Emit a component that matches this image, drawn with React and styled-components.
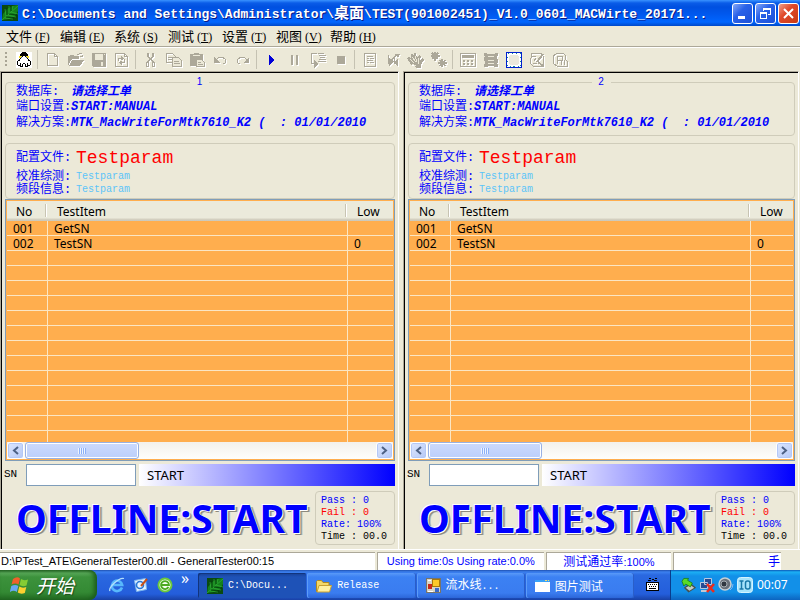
import React from "react";
import styled, { createGlobalStyle, css } from "styled-components";

const CJK = '"Noto Sans CJK SC", sans-serif';
const MONO = `"Liberation Mono", ${CJK}`;
const UI = `"Noto Sans", ${CJK}`;
const FACE = "#ece9d8";
const BLUE = "#0000ff";

const Global = createGlobalStyle`
  * { box-sizing: border-box; }
  body { margin: 0; background: ${FACE}; color: #000; font: 12px ${UI}; overflow: hidden; }
  button { font: inherit; border: 0; margin: 0; padding: 0; background: none; color: inherit; }
`;

const Screen = styled.div`
  height: 100vh;
  display: flex;
  flex-direction: column;
`;

/* title bar */
const TitleBar = styled.header`
  height: 26px;
  flex: none;
  display: flex;
  align-items: center;
  gap: 4px;
  padding: 0 1px 0 2px;
  background: linear-gradient(#3a93ff 0, #0a5ce8 3px, #0050e0 7px, #0058ee 14px, #0066ff 22px, #0048c8 26px);
`;
const Title = styled.h1`
  flex: 1;
  min-width: 0;
  margin: 0;
  overflow: hidden;
  white-space: pre;
  color: #fff;
  font: bold 13px/24px ${MONO};
  text-shadow: 1px 1px 0 #0a1883;
`;
const TitleHan = styled.span`
  font: bold 15px/24px ${CJK};
`;
const WindowButtons = styled.div`
  display: flex;
  gap: 2px;
`;
const WindowButton = styled.button`
  width: 21px;
  height: 21px;
  display: grid;
  place-items: center;
  border: 1px solid #fff;
  border-radius: 3px;
  background: ${(p) =>
    p.$close
      ? "linear-gradient(135deg, #f0a08a, #e0492a 40%, #c83a14)"
      : "linear-gradient(135deg, #86a8f8, #2a62e8 40%, #1c50d8)"};
`;

/* menu */
const MenuBar = styled.nav`
  height: 21px;
  flex: none;
  display: flex;
  padding-left: 6px;
  border-bottom: 1px solid #aca899;
`;
const MenuItem = styled.button`
  width: 54px;
  text-align: left;
  white-space: nowrap;
  font: 13px/18px ${CJK};
`;
const Hotkey = styled.span`
  font: 12px/18px "Liberation Serif", serif;
`;

/* toolbar */
const ToolBar = styled.div`
  height: 24px;
  flex: none;
  display: flex;
  align-items: center;
  padding-left: 5px;
  border-top: 1px solid #fff;
`;
const Grip = styled.span`
  width: 7px;
  height: 16px;
  background: repeating-linear-gradient(#a9a594 0 2px, transparent 2px 4px) 0 0 / 2px 100% no-repeat;
`;
const ToolButton = styled.button`
  width: 23px;
  height: 22px;
  display: grid;
  place-items: center;
  svg { display: block; ${(p) => p.$off && css`filter: drop-shadow(1px 1px 0 #fff);`} }
`;
const ToolSep = styled.span`
  width: 6px;
  height: 19px;
  background: linear-gradient(#c5c2b2, #c5c2b2) 2px 0 / 1px 100% no-repeat;
`;

/* work area */
const Work = styled.main`
  flex: 1;
  min-height: 0;
  display: grid;
  grid-template-columns: minmax(0, 403fr) minmax(0, 397fr);
  border-bottom: 1px solid #fff;
`;
const Station = styled.section`
  min-width: 0;
  min-height: 0;
  display: flex;
  flex-direction: column;
  margin-right: ${(p) => (p.$last ? 1 : 4)}px;
  padding: 10px 3px 4px 3px;
  border-top: 1px solid #aca899;
  border-left: 1px solid #aca899;
  border-right: 1px solid #fff;
  box-shadow: inset 1px 1px 0 #000;
`;
const Group = styled.section`
  position: relative;
  flex: none;
  margin-left: ${(p) => (p.$stats ? 0 : 1)}px;
  border: 1px solid #cfccba;
  border-radius: 4px;
  color: ${BLUE};
`;
const Source = styled(Group)`
  height: 54px;
  margin-bottom: 7px;
  padding: 1px 0 0 10px;
`;
const Config = styled(Group)`
  height: 56px;
  padding: 3px 0 0 10px;
`;
const Badge = styled.span`
  position: absolute;
  top: -6px;
  left: 50%;
  width: 19px;
  height: 9px;
  margin-left: -10px;
  overflow: hidden;
  text-align: center;
  background: ${FACE};
  font: 10px/9px "Liberation Sans", sans-serif;
`;
const Field = styled.div`
  display: flex;
  align-items: center;
  height: ${(p) => p.$h}px;
  white-space: pre;
`;
const FieldName = styled.span`
  width: ${(p) => p.$w || 55}px;
  font: 12px/12px ${MONO};
`;
const SourceValue = styled.span`
  font: italic bold 12px/16px ${MONO};
`;
const ConfigValue = styled.span`
  color: ${(p) => (p.$main ? "#ff0000" : "#5cc4f8")};
  font: ${(p) => (p.$main ? "18px/24px" : "10px/12px")} ${MONO};
`;

/* list */
const List = styled.div`
  flex: 1;
  min-height: 0;
  display: flex;
  flex-direction: column;
  margin-left: 1px;
  padding: 1px;
  border: 1px solid #7f9db9;
  background: #ffae4e;
`;
const Rows = styled.div`
  flex: 1;
  min-height: 0;
  overflow: hidden;
`;
const Table = styled.table`
  width: 100%;
  table-layout: fixed;
  border-collapse: separate;
  border-spacing: 0;
`;
const Col = styled.col`
  width: ${(p) => p.$w};
`;
const Th = styled.th`
  height: 20px;
  padding: 0 0 0 9px;
  text-align: left;
  font: 12px/17px ${UI};
  background:
    linear-gradient(#c8c4b2, #c8c4b2) right 2px top 3px / ${(p) => (p.$last ? 0 : 1)}px 13px no-repeat,
    linear-gradient(#fff, #fff) right 1px top 3px / ${(p) => (p.$last ? 0 : 1)}px 13px no-repeat,
    linear-gradient(#ebeadb 0 17px, #d6d2c2 18px, #cbc7b8 20px);
`;
const Td = styled.td`
  height: 15px;
  padding: 2px 0 0 6px;
  font: 12px/12px ${UI};
  border-bottom: 1px solid #fbe6c4;
  border-right: ${(p) => (p.$last ? 0 : 1)}px solid #fbe6c4;
`;
const ScrollBar = styled.div`
  height: 17px;
  flex: none;
  display: flex;
  justify-content: space-between;
  background: linear-gradient(#f3f1ec, #fefefb);
`;
const ScrollButton = styled.button`
  width: 17px;
  height: 17px;
  display: grid;
  place-items: center;
  border: 1px solid #fff;
  border-radius: 3px;
  background: linear-gradient(135deg, #dce6fd, #b6c9f6);
  box-shadow: inset 0 0 0 1px #b4c8f6;
`;
const Thumb = styled.div`
  width: 114px;
  margin: 0 auto 0 1px;
  display: grid;
  place-items: center;
  border: 1px solid #98b1e4;
  border-radius: 3px;
  box-shadow: inset 0 0 0 1px #fff;
  background: linear-gradient(#ccdafd, #bccffb);
`;
const ThumbGrip = styled.span`
  width: 8px;
  height: 6px;
  background: repeating-linear-gradient(90deg, #eef4fe 0 1px, #8cb0f8 1px 2px);
`;

/* serial number row */
const SerialRow = styled.div`
  flex: none;
  display: flex;
  height: 22px;
  margin-top: 3px;
`;
const SerialLabel = styled.label`
  width: 22px;
  font: 11px/20px ${MONO};
`;
const SerialInput = styled.input`
  width: 110px;
  height: 22px;
  padding: 0 3px;
  border: 1px solid #7f9db9;
  background: #fff;
  font: 12px ${UI};
`;
const StateBar = styled.div`
  flex: 1;
  margin-left: 3px;
  padding-left: 8px;
  font: 13px/22px ${UI};
  background: linear-gradient(90deg, #fff, ${BLUE});
`;
const ResultRow = styled.div`
  flex: none;
  display: flex;
  justify-content: space-between;
  margin-top: 5px;
`;
const Result = styled.strong`
  padding-left: 12px;
  color: ${BLUE};
  white-space: nowrap;
  font: bold 39px/54px ${UI};
  text-shadow: -1px -1px 0 #fff, -2px -1px 0 #e4e2dc, 1px 1px 0 #fff, 2px 2px 0 #8c897c, 3px 2px 0 #b4b1a4;
`;
const Stats = styled(Group)`
  width: 80px;
  height: 54px;
  padding: 3px 0 0 5px;
`;
const Stat = styled.div`
  color: ${(p) => p.$color};
  white-space: pre;
  font: 10px/12px ${MONO};
`;

/* status bar */
const StatusBar = styled.footer`
  height: 20px;
  flex: none;
  display: grid;
  grid-template-columns: 376fr 167fr 126fr 108fr 17fr;
  gap: 2px;
  padding-top: 2px;
`;
const StatusCell = styled.div`
  overflow: hidden;
  padding: 0 1px;
  border-top: 1px solid #aca899;
  border-left: ${(p) => (p.$first ? 0 : 1)}px solid #aca899;
  background: #fff;
  white-space: nowrap;
  color: ${(p) => (p.$first ? "#000" : BLUE)};
  text-align: ${(p) => p.$align || "left"};
  font: 11px/16px "Liberation Sans", ${CJK};
`;
const Han = styled.span`
  font: ${(p) => p.$size || 12}px/16px ${CJK};
`;

/* task bar */
const TaskBar = styled.footer`
  height: 30px;
  flex: none;
  display: flex;
  color: #fff;
  background: linear-gradient(#1f50b0 0, #3c81f0 2px, #2a68e0 5px, #245edb 24px, #1941a5 30px);
`;
const Start = styled.button`
  width: 97px;
  display: flex;
  align-items: center;
  gap: 6px;
  padding-left: 10px;
  border-radius: 0 8px 8px 0;
  background: linear-gradient(#2a6a2a 0, #58a858 3px, #3c923c 7px, #348a34 22px, #226a22 30px);
  box-shadow: inset -3px 0 4px #1c5c1c;
  font: italic 19px/26px ${CJK};
  text-shadow: 1px 1px 1px #1a4a1a;
`;
const QuickLaunch = styled.div`
  width: 101px;
  display: flex;
  align-items: center;
  gap: 8px;
  padding-left: 12px;
`;
const QuickButton = styled.button`
  width: 16px;
  height: 26px;
  display: grid;
  place-items: center;
`;
const More = styled.button`
  height: 26px;
  padding-bottom: 14px;
  font: 16px/12px ${UI};
`;
const Tasks = styled.div`
  flex: 1;
  min-width: 0;
  display: grid;
  grid-template-columns: repeat(4, minmax(0, 1fr));
  gap: 1px;
  padding: 3px 0 2px;
`;
const Task = styled.button`
  display: flex;
  align-items: center;
  gap: 5px;
  padding-left: 9px;
  border-radius: 2px;
  white-space: nowrap;
  font: 10px/16px ${MONO};
  background: ${(p) =>
    p.$active
      ? "linear-gradient(#173f94, #1e52b7 4px, #1e52b7)"
      : "linear-gradient(#5a9af8, #3c81f3 4px, #3a7cf0 20px, #2c66d8)"};
  box-shadow: ${(p) => (p.$active ? "inset 1px 1px 0 #12347c" : "inset 1px 0 0 #5c9cf8, inset -1px 0 0 #2a5ec8")};
`;
const Language = styled.button`
  width: 36px;
  display: grid;
  place-items: center;
`;
const Tray = styled.div`
  width: 130px;
  display: flex;
  align-items: center;
  gap: 2px;
  padding-left: 10px;
  border-left: 1px solid #0a3c8c;
  background: linear-gradient(#0c58b8 0, #1cb0f4 2px, #1290e8 6px, #1290e8 22px, #0c64c0 30px);
`;
const Clock = styled.time`
  margin-left: 2px;
  font: 12px/26px "Noto Sans", sans-serif;
`;

const G = "#aca899";
const Svg = ({ w = 16, h = 16, children, ...rest }) => (
  <svg width={w} height={h} viewBox={`0 0 ${w} ${h}`} fill="none" shapeRendering="crispEdges" aria-hidden="true" {...rest}>
    {children}
  </svg>
);

const LeafIcon = ({ size = 16 }) => (
  <svg width={size} height={size} viewBox="0 0 16 16" aria-hidden="true">
    <path fill="#0a4a10" d="M0 0h16v16H0z" />
    <path fill="#14801c" d="M0 15 1 9l4-5 5-3 6-1v6l-3 5-6 3z" />
    <path stroke="#37b93c" strokeWidth=".6" d="M0 15 16 1M4 11 3 4m4 4V1m3 4 1-4M6 10l8 2M9 7l7 2M3 13l8 1" />
    <path stroke="#04380a" strokeWidth=".8" d="M5 10 5 3m4 3 0-5M7 9l8 1M4 12l8 1" />
  </svg>
);

const icons = {
  penguin: (
    <Svg>
      <path fill="#fff" d="M0 0h16v16H0z" />
      <path fill="#000" d="M6 0h4v1h1v1h1v3H4V2h1V1h1z" />
      <path fill="#fff" d="M7 4h2v2H7z" />
      <path fill="#000" d="M7 3h2v1H7z" />
      <path fill="#f0dc20" d="M3 4h3v2H3zM10 4h3v2h-3z" />
      <path fill="#1830c0" d="M5 5h1v1H5zM10 5h1v1h-1z" />
      <path stroke="#000" d="M4.500 6v1M11.500 6v1M3.500 7v2M12.500 7v2M1.500 9v4M14.500 9v4M2.500 8v1M13.500 8v1M2 13.500h2M12 13.500h2M4 14.500h3M9 14.500h3M6.500 12v2M9.500 12v2M7 11.500h2M4.500 11v3M11.500 11v3" />
    </Svg>
  ),
  new: <Svg><path stroke={G} d="M2.500 1.500h7l3 3v9h-10zM9.500 1.500v3h3" /></Svg>,
  open: (
    <Svg>
      <path fill={G} d="M0 4h2V3h4v1h5v3H4v1H3v1H2v2H1v2H0zM4 8h12l-4 6H1z" />
      <path stroke={G} d="M9 2.500h2m0-1h3m0 1v2m-2 0h3" />
    </Svg>
  ),
  save: (
    <Svg>
      <path fill={G} d="M1 1h14v14H2l-1-1z" />
      <path fill={FACE} d="M4 2h8v6H4zM10 10h2v4h-2zM13 2h1v1h-1z" />
    </Svg>
  ),
  reload: (
    <Svg>
      <path stroke={G} d="M1.500 1.500h9l3 3v10h-12zM10.500 1.500v3h3" />
      <path stroke={G} d="M4.500 9V6.500H8M10.500 7v3.500H7" />
      <path fill={G} d="M7 4l3 2.500L7 9zM8 8l-3 2.500L8 13z" />
    </Svg>
  ),
  cut: (
    <Svg>
      <path stroke={G} strokeWidth="1.500" d="M5 1v3l5 6M10 1v3l-5 6" />
      <path stroke={G} d="M3.500 10.500h2v4h-2zM9.500 10.500h2v4h-2z" strokeWidth="1.500" />
    </Svg>
  ),
  copy: (
    <Svg>
      <path stroke={G} d="M.5 1.500h6l3 3v6h-9zM2 5.500h5M2 7.500h4" />
      <path fill={FACE} stroke={G} d="M6.500 5.500h6l3 3v6h-9zM8 9.500h5m-5 2h6" />
    </Svg>
  ),
  paste: (
    <Svg>
      <path fill={G} d="M1 2h4V1h5v1h4v12H1z" />
      <path fill={FACE} d="M4 3h7v1H4z" />
      <path fill={FACE} stroke={G} d="M7.500 7.500h5l3 3v4h-8zM9 10.500h3m-3 2h5" />
    </Svg>
  ),
  undo: <Svg><path stroke={G} d="M4 7.500l3-2h4l2.500 2v3l-2 1.500" /><path fill={G} d="M2 5v6h6z" /></Svg>,
  redo: <Svg><path stroke={G} d="M12 7.500l-3-2H5L2.500 7.500v3l2 1.500" /><path fill={G} d="M14 5v6H8z" /></Svg>,
  play: <Svg><path fill="#0000d8" d="M5 3h1v1h1v1h1v1h1v1h1v2H9v1H8v1H7v1H6v1H5z" /></Svg>,
  pause: <Svg><path fill={G} d="M4 3h2v10H4zM9 3h2v10H9z" /></Svg>,
  step: (
    <Svg w={18}>
      <path stroke={G} d="M8 1.500H2.500v10H5M9 1.500h6m-5 2h7m-6 2h5m-6 2h7m-8 2h8" />
      <path fill={G} d="M5 8l4 4-4 4z" />
    </Svg>
  ),
  stop: <Svg><path fill={G} d="M4 4h8v8H4z" /></Svg>,
  page: (
    <Svg>
      <path stroke={G} d="M2.500 1.500h11v13h-11zM5 4.500h6m-6 2h2m1 0h4m-7 2h6m-6 2h2m1 0h4" />
    </Svg>
  ),
  swap: (
    <Svg>
      <path stroke={G} d="M3.500 3v8l3 1M7 8l4-5M9.500 4v8" strokeWidth="1.500" />
      <path fill={G} d="M4 6l5 3-5 5zM10 2l5 0-2 4zM13 7l-4 3.500 4 3.500z" />
    </Svg>
  ),
  hand: (
    <Svg w={18}>
      <path fill={G} d="M0 6l2-1 2 2V2h2v3l1-4h2l1 5 2-3 2 1-1 4 3-2 1 2-3 5v3H9L6 13H4z" />
      <path stroke={FACE} d="M3 7l4 4M5 5l4 5M8 4l2 6m2-4l-1 6M5 12l4 2" />
    </Svg>
  ),
  gears: (
    <Svg w={18}>
      <path stroke={G} strokeWidth="1.500" d="M5 0v9M1 4h9M2 1l6 6m0-6L2 7M12 7v8m-4-4h9m-7-3l5 6m0-6l-5 6" />
      <path fill={G} d="M3 2h4v4H3zM11 9h3v4h-3z" />
    </Svg>
  ),
  calc: (
    <Svg>
      <path stroke={G} d="M.5 1.500h15v13H.5z" />
      <path fill={G} d="M2 3h12v3H2zM3 8h2v2H3zm4 0h2v2H7zm4 0h2v2h-2zM3 11h2v2H3zm4 0h2v2H7zm4 0h2v2h-2z" />
    </Svg>
  ),
  film: (
    <Svg>
      <path fill={G} d="M1 1h3v1h8V1h3v3h-1v3h1v4h-1v1h1v3h-4v-1H5v1H1v-3h1V9H1V5h1V4H1z" />
      <path fill={FACE} d="M5 4h6v1H5zm0 4h6v1H5zm0 3h6v1H5z" />
    </Svg>
  ),
  select: (
    <Svg>
      <path fill="#fff" stroke="#0020d0" d="M.5.5h15v15H.5z" />
      <path stroke="#188a94" strokeDasharray="1 3" d="M1.500 1.500h13v13h-13z" />
      <path fill="#ebe8dc" d="M4 3h8v1h1v8h-1v1H4v-1H3V4h1z" />
    </Svg>
  ),
  edit: (
    <Svg>
      <path stroke={G} d="M2.500 1.500h10l2 3v10h-10l-3-3zM3 4h4m0 2l-2 3M4 11h4" />
      <path stroke={G} strokeWidth="2" d="M14 2l-6 8M9 10l5 4" />
    </Svg>
  ),
  report: (
    <Svg>
      <path stroke={G} d="M1.500 4l3-2.500h7l2 2v4l2 2v5h-10l-4-3z" />
      <path stroke={G} d="M5.500 12V4.500h5v4h-5m4 0v4M12.500 8v5" />
    </Svg>
  ),
};

const toolGroups = [
  [["penguin", "QQ", true]],
  [["new", "新建"], ["open", "打开"], ["save", "保存"], ["reload", "刷新"]],
  [["cut", "剪切"], ["copy", "复制"], ["paste", "粘贴"], ["undo", "撤销"], ["redo", "重做"]],
  [["play", "开始", true], ["pause", "暂停"], ["step", "单步"], ["stop", "停止"]],
  [["page", "文档"], ["swap", "切换"], ["hand", "手动"], ["gears", "配置"]],
  [["calc", "计算"], ["film", "序列"], ["select", "选择", true], ["edit", "编辑"], ["report", "报告"]],
];

const menus = [["文件", "F"], ["编辑", "E"], ["系统", "S"], ["测试", "T"], ["设置", "T"], ["视图", "V"], ["帮助", "H"]];

const testItems = [["001", "GetSN", ""], ["002", "TestSN", "0"], ...Array.from({ length: 13 }, () => ["", "", ""])];

const Chevron = ({ right }) => (
  <svg width="7" height="9" viewBox="0 0 7 9" aria-hidden="true">
    <path d={right ? "M1 1l4 3.500-4 3.500" : "M6 1L2 4.500l4 3.500"} fill="none" stroke="#4d6185" strokeWidth="2" />
  </svg>
);

function TestStation({ number, last }) {
  const id = `sn-${number}`;
  return (
    <Station $last={last} aria-label={`${number}`}>
      <Source>
        <Badge>{number}</Badge>
        <Field $h={15}><FieldName>数据库:</FieldName><SourceValue>请选择工单</SourceValue></Field>
        <Field $h={16}><FieldName>端口设置:</FieldName><SourceValue>START:MANUAL</SourceValue></Field>
        <Field $h={16}><FieldName>解决方案:</FieldName><SourceValue>MTK_MacWriteForMtk7610_K2 (  : 01/01/2010</SourceValue></Field>
      </Source>
      <Config>
        <Field $h={22}><FieldName $w={60}>配置文件:</FieldName><ConfigValue $main>Testparam</ConfigValue></Field>
        <Field $h={15}><FieldName $w={60}>校准综测:</FieldName><ConfigValue>Testparam</ConfigValue></Field>
        <Field $h={12}><FieldName $w={60}>频段信息:</FieldName><ConfigValue>Testparam</ConfigValue></Field>
      </Config>
      <List>
        <Rows>
          <Table>
            <colgroup><Col $w="41px" /><Col $w="300px" /><Col $w="auto" /></colgroup>
            <thead><tr><Th>No</Th><Th>TestItem</Th><Th $last>Low</Th></tr></thead>
            <tbody>
              {testItems.map((r, i) => (
                <tr key={i}><Td>{r[0]}</Td><Td>{r[1]}</Td><Td $last>{r[2]}</Td></tr>
              ))}
            </tbody>
          </Table>
        </Rows>
        <ScrollBar>
          <ScrollButton aria-label="向左"><Chevron /></ScrollButton>
          <Thumb><ThumbGrip /></Thumb>
          <ScrollButton aria-label="向右"><Chevron right /></ScrollButton>
        </ScrollBar>
      </List>
      <SerialRow>
        <SerialLabel htmlFor={id}>SN</SerialLabel>
        <SerialInput id={id} />
        <StateBar>START</StateBar>
      </SerialRow>
      <ResultRow>
        <Result>OFFLINE:START</Result>
        <Stats $stats>
          <Stat $color={BLUE}>Pass : 0</Stat>
          <Stat $color="#ff0000">Fail : 0</Stat>
          <Stat $color={BLUE}>Rate: 100%</Stat>
          <Stat $color="#000">Time : 00.0</Stat>
        </Stats>
      </ResultRow>
    </Station>
  );
}

const Flag = () => (
  <svg width="20" height="20" viewBox="0 0 20 20" aria-hidden="true">
    <path fill="#f0602c" d="M3 4q4-3 7-.5L8.500 9.500q-3-2-7 0z" />
    <path fill="#86cc34" d="M11 4q3 2 7 .5l-1.500 6q-4 1.500-7-.5z" />
    <path fill="#68a8f4" d="M1.300 11q4-2 7 0L6.800 17q-3-2.500-7 0z" />
    <path fill="#fcd030" d="M9.300 11.500q3 2 7 .5l-1.500 6q-4 1.500-7-.5z" />
  </svg>
);
const Explorer = ({ color, ring }) => (
  <svg width="16" height="16" viewBox="0 0 16 16" aria-hidden="true">
    <path d="M13 10.500A5.200 5.200 0 1 1 13.200 8H4" fill="none" stroke={color} strokeWidth="2.600" />
    <path d="M1 14C-1 11 10 0 15 1.500" fill="none" stroke={ring} strokeWidth="1.300" />
  </svg>
);
const GreenBrowser = () => (
  <svg width="16" height="16" viewBox="0 0 16 16" aria-hidden="true">
    <circle cx="8" cy="8" r="6.500" fill="#f4fff0" stroke="#6cc83c" strokeWidth="2" />
    <path d="M11.500 10A4 4 0 1 1 12 8H5" fill="none" stroke="#4caa20" strokeWidth="1.800" />
  </svg>
);
const Outlook = () => (
  <svg width="16" height="16" viewBox="0 0 16 16" aria-hidden="true">
    <path fill="#e8f4ff" stroke="#78b4f0" d="M1.500 3.500l11-2 1 11-10 2z" />
    <circle cx="7" cy="8" r="3.500" fill="none" stroke="#2878d8" strokeWidth="1.600" />
    <path stroke="#c85018" strokeWidth="2" d="M14 2L8 9" />
  </svg>
);
const Folder = () => (
  <svg width="16" height="14" viewBox="0 0 16 14" aria-hidden="true">
    <path fill="#f4d868" stroke="#b08820" d="M.5 12.500V2.500l1-1h4l1.500 2h6v9z" />
    <path fill="#fff0a0" stroke="#c8a030" d="M3 6.500h12.500l-2 6.500H1z" />
  </svg>
);
const FormIcon = () => (
  <Svg w={15} h={15}>
    <path fill="#d8d4c4" stroke="#787468" d="M.5.5h14v14H.5z" />
    <path fill="#fcc828" stroke="#a87808" d="M6.500 1.500h7v7h-7z" />
    <path fill="#c82818" d="M2 6h4v5H2z" />
    <path fill="#3868c8" d="M9 10h4v4H9z" />
    <path stroke="#fff" d="M2 2.500h3M2 13.500h5" />
  </Svg>
);
const WindowIcon = () => (
  <Svg w={15} h={12}>
    <path fill="#fff" d="M0 0h15v12H0z" />
    <path fill="#38a0f8" d="M0 0h15v2H0z" />
    <path fill="#fcdc68" d="M10 0h2v1h-2zM13 0h1v1h-1z" />
  </Svg>
);
const Keyboard = () => (
  <Svg w={13} h={14}>
    <path stroke="#000" d="M3 .5h2m1 1h2m1-1h2M2 2.500h3m3 0h3" />
    <path fill="#fff" stroke="#000" d="M.5 4.500h12v8H.5z" />
    <path stroke="#000" strokeDasharray="1 1" d="M2 6.500h10M3 8.500h8" />
    <path stroke="#000" d="M3 10.500h7" />
  </Svg>
);
const TrayIcons = () => (
  <>
    <svg width="16" height="16" viewBox="0 0 17 16" aria-hidden="true">
      <path fill="#48504c" d="M3 11l7-5 6 5-8 5z" /><path fill="#c4ccc8" d="M5 11l5-3 4 3-5 3z" />
      <path fill="#58dc28" stroke="#187410" strokeWidth=".8" d="M3 1l5 0-1 2 5 3-2 4-5-3-2 2-2-5z" />
    </svg>
    <svg width="17" height="16" viewBox="0 0 17 16" aria-hidden="true">
      <path fill="#244c94" stroke="#b8c8e0" d="M5.500 1.500h7v6h-7zM1.500 5.500h7v6h-7z" /><path stroke="#c0c8d4" strokeWidth="2" d="M2 14h7" />
      <path stroke="#ec2c1c" strokeWidth="2.600" d="M8 7l7 8m0-8l-7 8" />
    </svg>
    <svg width="17" height="16" viewBox="0 0 17 16" aria-hidden="true">
      <circle cx="7" cy="7" r="6" fill="#687078" stroke="#c8d0d4" strokeWidth="1.500" />
      <circle cx="6" cy="7" r="3" fill="#303840" stroke="#a8b0b4" />
      <path fill="none" stroke="#88b8f0" d="M12 13q3-2 3-6" />
    </svg>
    <svg width="16" height="16" viewBox="0 0 16 16" aria-hidden="true">
      <rect x=".5" y=".5" width="15" height="15" rx="3" fill="#a8e4fc" stroke="#d4f4ff" />
      <path fill="none" stroke="#1878a8" strokeWidth="1.500" d="M2.500 4h4m-2 0v8m-2 0h4" />
      <rect x="8.500" y="4" width="4.500" height="8" rx="2" fill="none" stroke="#1878a8" strokeWidth="1.500" />
    </svg>
  </>
);

export default function App() {
  return (
    <Screen>
      <Global />
      <TitleBar>
        <LeafIcon />
        <Title>
          {"C:\\Documents and Settings\\Administrator\\"}<TitleHan>桌面</TitleHan>{"\\TEST(901002451)_V1.0_0601_MACWirte_20171..."}
        </Title>
        <WindowButtons>
          <WindowButton aria-label="最小化"><Svg w={13} h={13}><path fill="#fff" d="M2 9h7v3H2z" /></Svg></WindowButton>
          <WindowButton aria-label="还原">
            <Svg w={13} h={13}><path stroke="#fff" d="M4.500 4V1.500h7v6H9M4 2.500h7M1.500 5.500h6v6h-6zM1 6.500h7" /></Svg>
          </WindowButton>
          <WindowButton $close aria-label="关闭">
            <svg width="13" height="13" viewBox="0 0 13 13" aria-hidden="true"><path stroke="#fff" strokeWidth="2" d="M2 2l9 9m0-9l-9 9" /></svg>
          </WindowButton>
        </WindowButtons>
      </TitleBar>
      <MenuBar>
        {menus.map(([name, key]) => (
          <MenuItem key={name}>{name}<Hotkey> (<u>{key}</u>)</Hotkey></MenuItem>
        ))}
      </MenuBar>
      <ToolBar role="toolbar">
        <Grip />
        {toolGroups.map((group, g) => (
          <React.Fragment key={g}>
            {g > 0 && <ToolSep />}
            {group.map(([icon, label, on]) => (
              <ToolButton key={icon} $off={!on} disabled={!on} aria-label={label}>{icons[icon]}</ToolButton>
            ))}
          </React.Fragment>
        ))}
      </ToolBar>
      <Work>
        <TestStation number={1} />
        <TestStation number={2} last />
      </Work>
      <StatusBar>
        <StatusCell $first>D:\PTest_ATE\GeneralTester00.dll - GeneralTester00:15</StatusCell>
        <StatusCell $align="center">Using time:0s Using rate:0.0%</StatusCell>
        <StatusCell $align="center"><Han>测试通过率</Han>:100%</StatusCell>
        <StatusCell $align="right"><Han>手</Han></StatusCell>
      </StatusBar>
      <TaskBar>
        <Start><Flag />开始</Start>
        <QuickLaunch>
          <QuickButton aria-label="Internet Explorer"><Explorer color="#58b8fc" ring="#b4e0fc" /></QuickButton>
          <QuickButton aria-label="Outlook Express"><Outlook /></QuickButton>
          <QuickButton aria-label="浏览器"><GreenBrowser /></QuickButton>
          <More>»</More>
        </QuickLaunch>
        <Tasks>
          <Task $active><LeafIcon />C:\Docu...</Task>
          <Task><Folder />Release</Task>
          <Task><FormIcon /><span><Han>流水线</Han>...</span></Task>
          <Task><WindowIcon /><Han>图片测试</Han></Task>
        </Tasks>
        <Language aria-label="键盘"><Keyboard /></Language>
        <Tray><TrayIcons /><Clock>00:07</Clock></Tray>
      </TaskBar>
    </Screen>
  );
}
